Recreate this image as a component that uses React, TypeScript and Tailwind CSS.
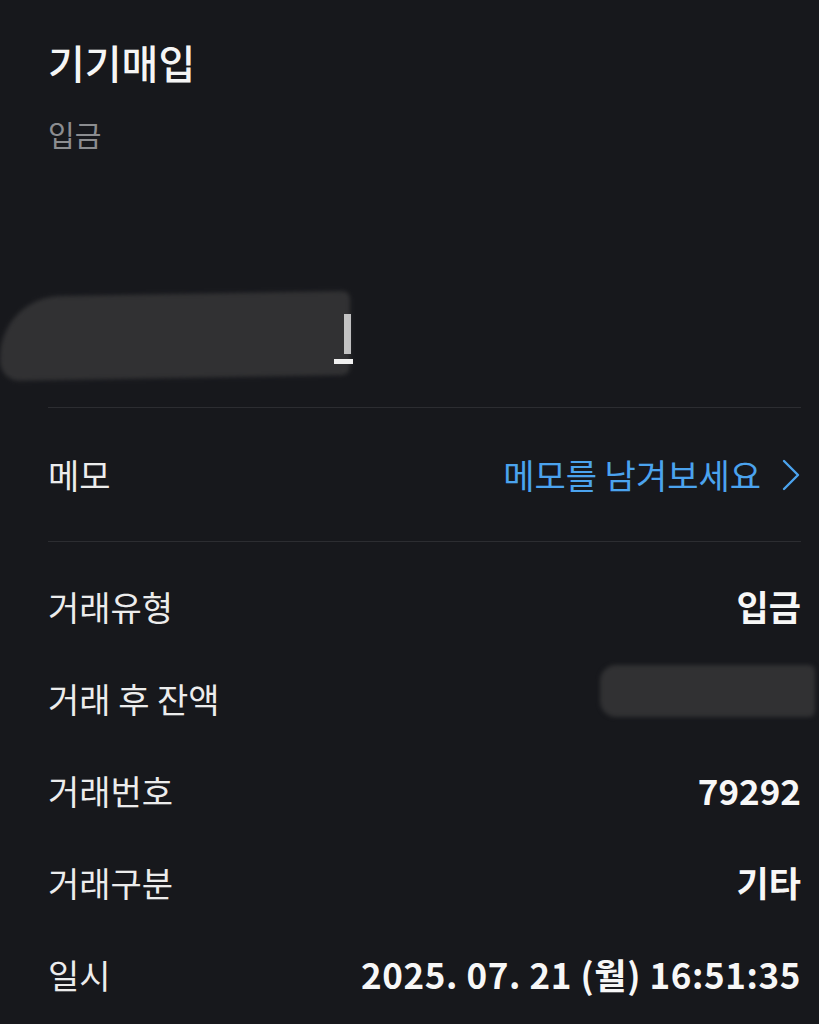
const font = { fontFamily: '"Noto Sans CJK KR", "Noto Sans", sans-serif' };

// Smudged redaction mark over sensitive values
function Redaction({ className }: { className: string }) {
  return <div className={`bg-[#313133] blur-[2px] ${className}`} />;
}

const details: { label: string; value?: string; wide?: boolean }[] = [
  { label: '거래유형', value: '입금' },
  { label: '거래 후 잔액' },
  { label: '거래번호', value: '79292' },
  { label: '거래구분', value: '기타' },
  { label: '일시', value: '2025. 07. 21 (월) 16:51:35', wide: true },
];

export default function App() {
  return (
    <div className="w-[819px] h-[1024px] overflow-hidden bg-[#17181c] text-white" style={font}>
      <div className="pl-[48px] pr-[18px] pt-[38px]">
        <h1 className="text-[40px] leading-[48px] font-medium text-[#f5f5f5]">기기매입</h1>
        <p className="mt-[28px] text-[29px] leading-[40px] text-[#8c8d90]">입금</p>
      </div>

      {/* Amount (redacted) */}
      <div className="h-[253px] pt-[140px]">
        <div className="relative w-[355px] h-[88px]">
          <Redaction className="absolute left-0 top-0 w-[350px] h-[84px] rounded-r-[8px] rounded-tl-[60px] rounded-bl-[20px] -skew-y-1" />
          <div className="absolute left-[344px] top-[20px] w-[7px] h-[40px] bg-[#e8e8e8] blur-[0.5px] opacity-80" />
          <div className="absolute left-[334px] top-[65px] w-[19px] h-[5px] bg-[#f0f0f0] blur-[0.5px]" />
        </div>
      </div>

      <div className="ml-[48px] mr-[18px] h-px bg-[#2c2d31]" />

      <div className="ml-[48px] mr-[18px] h-[133px] flex items-center justify-between">
        <span className="text-[34px] text-[#ececec]">메모</span>
        <span className="flex items-center gap-[21px] text-[34px] text-[#4ba3ee]">
          메모를 남겨보세요
          <svg width="18" height="32" viewBox="0 0 18 32" fill="none" className="mr-px">
            <polyline points="2,2 16,16 2,30" stroke="#4ba3ee" strokeWidth="2.4" strokeLinecap="round" strokeLinejoin="round" />
          </svg>
        </span>
      </div>

      <div className="ml-[48px] mr-[18px] h-px bg-[#2c2d31]" />

      <div className="ml-[48px] mr-[18px] pt-[18px]">
        {details.map((row) => (
          <div key={row.label} className="h-[92px] flex items-center justify-between">
            <span className="text-[34px] text-[#ececec]">{row.label}</span>
            {row.value ? (
              <span className={`text-[35px] font-semibold text-[#f7f7f7] ${row.wide ? 'tracking-[0.6px]' : ''}`}>
                {row.value}
              </span>
            ) : (
              <Redaction className="w-[215px] h-[52px] -mr-[14px] -mt-[14px] rounded-l-[16px] rounded-r-[6px]" />
            )}
          </div>
        ))}
      </div>
    </div>
  );
}
